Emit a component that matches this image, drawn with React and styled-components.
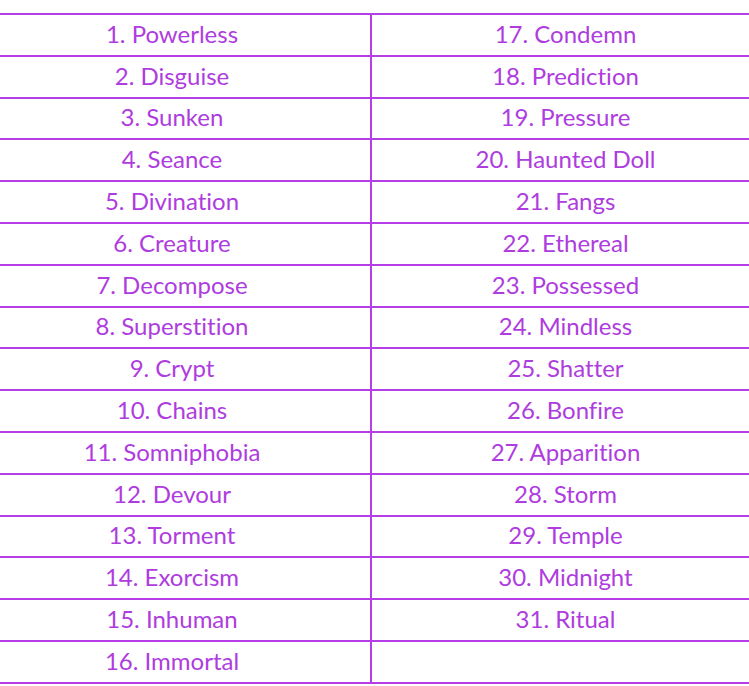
import React from "react";
import styled, { createGlobalStyle } from "styled-components";

const Global = createGlobalStyle`
  html, body { margin: 0; padding: 0; background: #fff; }
  body { font-family: Lato, "Open Sans", sans-serif; }
`;

const Page = styled.div`
  padding-top: 13px;
  width: 749px;
  overflow: hidden;
`;

const Table = styled.div`
  display: grid;
  grid-template-columns: 396px 387px;
  width: 783px;
  margin-left: -24px;
  border-top: 2px solid #b63ee6;
`;

const Cell = styled.div`
  box-sizing: border-box;
  height: 41.8px;
  padding-bottom: 2px;
  padding-right: ${(p) => (p.$left ? "2px" : "0")};
  display: flex;
  align-items: center;
  justify-content: center;
  border-bottom: 2px solid #b63ee6;
  border-right: ${(p) => (p.$left ? "2px solid #b63ee6" : "none")};
  color: #ae3cde;
  font-size: 24px;
  line-height: 1;
  font-variant-ligatures: none;
  font-feature-settings: "liga" 0;
  white-space: nowrap;
`;

const left = [
  "Powerless","Disguise","Sunken","Seance","Divination","Creature","Decompose","Superstition",
  "Crypt","Chains","Somniphobia","Devour","Torment","Exorcism","Inhuman","Immortal",
];
const right = [
  "Condemn","Prediction","Pressure","Haunted Doll","Fangs","Ethereal","Possessed","Mindless",
  "Shatter","Bonfire","Apparition","Storm","Temple","Midnight","Ritual",
];

export default function App() {
  const rows = left.map((l, i) => [
    `${i + 1}. ${l}`,
    right[i] ? `${i + 17}. ${right[i]}` : "",
  ]);
  return (
    <Page>
      <Global />
      <Table>
        {rows.map(([a, b], i) => (
          <React.Fragment key={i}>
            <Cell $left>{a}</Cell>
            <Cell>{b}</Cell>
          </React.Fragment>
        ))}
      </Table>
    </Page>
  );
}
